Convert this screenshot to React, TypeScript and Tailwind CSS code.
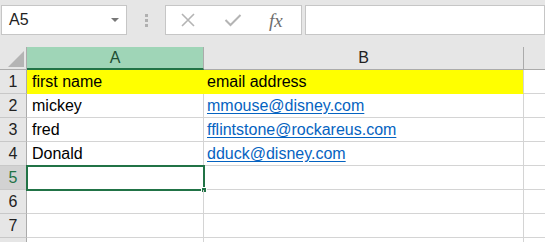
import React from 'react';

// ─── Data ─────────────────────────────────────────────────────────────────────

interface Row {
  a?: string;
  b?: string;
  link?: boolean;
  fill?: boolean;
}

const ROWS: Row[] = [
  { a: 'first name', b: 'email address', fill: true },
  { a: 'mickey', b: 'mmouse@disney.com', link: true },
  { a: 'fred', b: 'fflintstone@rockareus.com', link: true },
  { a: 'Donald', b: 'dduck@disney.com', link: true },
  {},
  {},
  {},
  {},
];

const SELECTED = 5;
const VISIBLE_NUMBERS = 7;

// ─── Component ───────────────────────────────────────────────────────────────

const App: React.FC = () => {
  return (
    <div
      className="w-[545px] h-[242px] overflow-hidden bg-[#e6e6e6] text-[#000]"
      style={{ fontFamily: '"Liberation Sans", Arial, sans-serif' }}
    >
      {/* Formula bar */}
      <div className="h-[47px] flex items-start pt-[5px]">
        <div className="ml-[1px] w-[126px] h-[30px] bg-white border border-[#c6c6c6] flex items-center justify-between pl-[7px] pr-[6px]">
          <span className="text-[16px] text-[#222]">A5</span>
          <svg width="10" height="6" viewBox="0 0 10 6">
            <path d="M1 1 L9 1 L5 5 Z" fill="#777" />
          </svg>
        </div>
        <div className="w-[38px] h-[30px] flex flex-col items-center justify-center gap-[2px]">
          <span className="w-[3px] h-[3px] bg-[#b0b0b0]" />
          <span className="w-[3px] h-[3px] bg-[#b0b0b0]" />
          <span className="w-[3px] h-[3px] bg-[#b0b0b0]" />
        </div>
        <div className="w-[137px] h-[30px] bg-white border border-[#c6c6c6] flex items-center">
          <svg width="16" height="16" viewBox="0 0 16 16" className="ml-[14px]">
            <path d="M2 2 L14 14 M14 2 L2 14" stroke="#b4b4b4" strokeWidth="1.6" fill="none" />
          </svg>
          <svg width="18" height="16" viewBox="0 0 18 16" className="ml-[28px]">
            <path d="M1.5 8 L6.5 13 L16.5 3" stroke="#b4b4b4" strokeWidth="2" fill="none" />
          </svg>
          <span
            className="ml-[27px] italic text-[19px] leading-none text-[#6e6e6e]"
            style={{ fontFamily: '"Liberation Serif", "Times New Roman", serif' }}
          >
            fx
          </span>
        </div>
        <div className="ml-[3px] flex-1 h-[30px] bg-white border border-[#c6c6c6]" />
      </div>

      {/* Sheet */}
      <div className="grid grid-cols-[27px_177px_320px_1fr] bg-white text-[16px] leading-[18px]">
        {/* Column headers */}
        <div className="h-[23px] bg-[#e6e6e6] border-r border-b border-[#ababab] flex items-end justify-end pr-[2px] pb-[2px]">
          <svg width="16" height="16" viewBox="0 0 16 16">
            <path d="M16 0 L16 16 L0 16 Z" fill="#b4b4b4" />
          </svg>
        </div>
        <div className="h-[23px] bg-[#9fd5b7] border-r border-[#ababab] border-b-2 border-b-[#217346] flex items-center justify-center text-[#1e4e33]">
          A
        </div>
        <div className="h-[23px] bg-[#e6e6e6] border-r border-b border-[#ababab] flex items-center justify-center text-[#222]">
          B
        </div>
        <div className="h-[23px] bg-[#e6e6e6] border-b border-[#ababab]" />

        {ROWS.map((r, i) => {
          const n = i + 1;
          const sel = n === SELECTED;
          return (
            <React.Fragment key={n}>
              <div
                className={`h-[24px] border-r border-[#ababab] border-b border-b-[#c8c8c8] flex items-end justify-center pb-[2px] ${
                  sel ? 'bg-[#d2d2d2] text-[#217346]' : 'bg-[#e6e6e6] text-[#222]'
                }`}
              >
                {n <= VISIBLE_NUMBERS ? n : null}
              </div>
              <div
                className={`relative h-[24px] border-r border-b flex items-end pl-[5px] pb-[2px] ${
                  r.fill ? 'bg-[#ffff00] border-[#ffff00]' : 'border-[#d4d4d4]'
                }`}
              >
                {r.a}
                {sel && (
                  <>
                    <div className="absolute -left-[1px] -top-[1px] -right-[2px] -bottom-[2px] border-2 border-[#217346]" />
                    <div className="absolute -right-[4px] -bottom-[4px] w-[6px] h-[6px] bg-[#217346] border border-white" />
                  </>
                )}
              </div>
              <div
                className={`h-[24px] border-r border-b flex items-end pl-[3px] pb-[2px] ${
                  r.fill ? 'bg-[#ffff00] border-[#ffff00] border-r-[#d4d4d4]' : 'border-[#d4d4d4]'
                }`}
              >
                {r.link ? (
                  <span className="text-[#0563c1] underline underline-offset-2">{r.b}</span>
                ) : (
                  r.b
                )}
              </div>
              <div className="h-[24px] border-b border-[#d4d4d4]" />
            </React.Fragment>
          );
        })}
      </div>
    </div>
  );
};

export default App;
